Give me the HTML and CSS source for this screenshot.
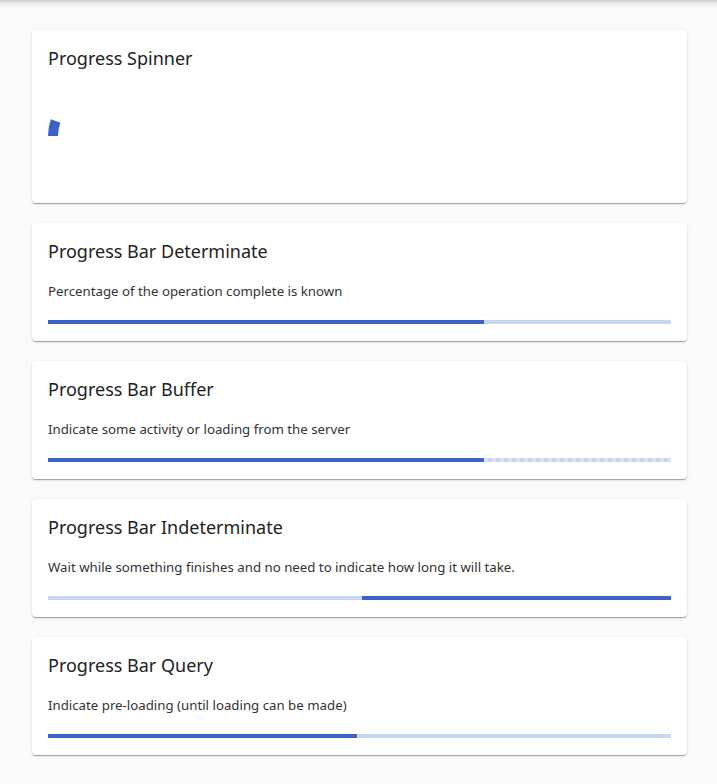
FILE: index.html
```html
<!DOCTYPE html>
<html lang="en">
<head>
<meta charset="utf-8">
<title>Progress</title>
<link rel="stylesheet" href="styles.css">
</head>
<body>
<div class="topshade"></div>
<main class="page">
  <section class="card">
    <h2 class="card-title">Progress Spinner</h2>
    <div class="spinner">
      <svg width="100" height="100" viewBox="0 0 100 100">
        <path d="M 5 50 A 45 45 0 0 1 7.6 35" fill="none" stroke="#3a62c8" stroke-width="10" stroke-linecap="butt"/>
      </svg>
    </div>
  </section>

  <section class="card">
    <h2 class="card-title">Progress Bar Determinate</h2>
    <p class="card-text">Percentage of the operation complete is known</p>
    <div class="bar"><div class="fill" style="width:70%"></div></div>
  </section>

  <section class="card">
    <h2 class="card-title">Progress Bar Buffer</h2>
    <p class="card-text">Indicate some activity or loading from the server</p>
    <div class="bar bar-buffer"><div class="fill" style="width:70%"></div></div>
  </section>

  <section class="card">
    <h2 class="card-title">Progress Bar Indeterminate</h2>
    <p class="card-text">Wait while something finishes and no need to indicate how long it will take.</p>
    <div class="bar"><div class="fill" style="margin-left:50.4%;width:49.6%"></div></div>
  </section>

  <section class="card">
    <h2 class="card-title">Progress Bar Query</h2>
    <p class="card-text">Indicate pre-loading (until loading can be made)</p>
    <div class="bar"><div class="fill" style="width:49.6%"></div></div>
  </section>
</main>
</body>
</html>
```
FILE: styles.css
```css
* { box-sizing: border-box; }
html, body {
  margin: 0;
  padding: 0;
  background: #fafafa;
}
body {
  font-family: "Noto Sans", "Open Sans", "Liberation Sans", sans-serif;
  color: rgba(0, 0, 0, 0.87);
}
.topshade {
  position: fixed;
  top: 0;
  left: 0;
  right: 0;
  height: 8px;
  background: linear-gradient(to bottom, rgba(0,0,0,0.18), rgba(0,0,0,0.06) 40%, rgba(0,0,0,0));
  pointer-events: none;
}
.page {
  display: flex;
  flex-direction: column;
  gap: 20px;
  padding: 30px 30px 30px 32px;
}
.card {
  background: #fff;
  border-radius: 4px;
  padding: 16px 16px 17px 16px;
  box-shadow: 0 2px 1px -1px rgba(0,0,0,.2), 0 1px 1px 0 rgba(0,0,0,.14), 0 1px 3px 0 rgba(0,0,0,.12);
}
.card-title {
  margin: 0;
  font-size: 18px;
  line-height: 24px;
  font-weight: 400;
  color: #222;
}
.card-text {
  margin: 18px 0 0;
  font-size: 13.25px;
  line-height: 20px;
  color: #333;
}
.spinner {
  margin-top: 16px;
  width: 100px;
  height: 100px;
}
.spinner svg { display: block; }
.bar {
  margin-top: 19px;
  height: 4px;
  background: #cad7f0;
  display: flex;
}
.bar .fill {
  height: 4px;
  background: #3a62c8;
}
.bar-buffer {
  background: linear-gradient(90deg, #c8d5ef 50%, #dae3f6 50%);
  background-size: 8px 4px;
}
```
